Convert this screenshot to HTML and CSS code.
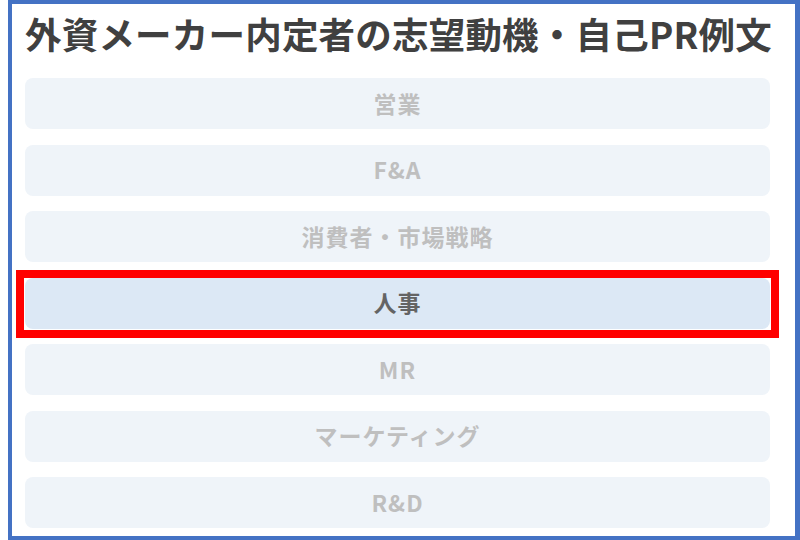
FILE: index.html
```html
<!DOCTYPE html>
<html lang="ja">
<head>
<meta charset="utf-8">
<link rel="stylesheet" href="styles.css">
</head>
<body>
<div class="frame">
  <h1 class="title">外資メーカー内定者の志望動機・自己PR例文</h1>
  <div class="list">
    <div class="item">営業</div>
    <div class="item">F&amp;A</div>
    <div class="item">消費者・市場戦略</div>
    <div class="item active">人事</div>
    <div class="item">MR</div>
    <div class="item">マーケティング</div>
    <div class="item">R&amp;D</div>
  </div>
</div>
</body>
</html>
```
FILE: styles.css
```css
html, body {
  margin: 0;
  padding: 0;
  background: #ffffff;
}
body {
  font-family: "Noto Sans CJK JP", "Noto Sans", sans-serif;
}
.frame {
  box-sizing: border-box;
  margin-left: 8px;
  width: 792px;
  height: 540px;
  border: 4px solid #4472c4;
  border-right-width: 5px;
  padding: 8px 25px 0 13px;
}
.title {
  margin: 0 0 22px 0;
  font-size: 36.5px;
  line-height: 44px;
  font-weight: 700;
  color: #404040;
  white-space: nowrap;
  letter-spacing: 0.2px;
}
.list {
  display: flex;
  flex-direction: column;
  gap: 15.5px;
}
.item {
  position: relative;
  box-sizing: border-box;
  height: 51px;
  padding-bottom: 2px;
  border-radius: 8px;
  background: #eff4f9;
  color: #bfbfbf;
  font-size: 23px;
  font-weight: 700;
  display: flex;
  align-items: center;
  justify-content: center;
  letter-spacing: 1px;
}
.item.active {
  background: #dce8f5;
  color: #646464;
}
.item.active::after {
  content: "";
  position: absolute;
  left: -9px;
  right: -9px;
  top: -8px;
  bottom: -9px;
  border: 8px solid #ff0000;
}
```
